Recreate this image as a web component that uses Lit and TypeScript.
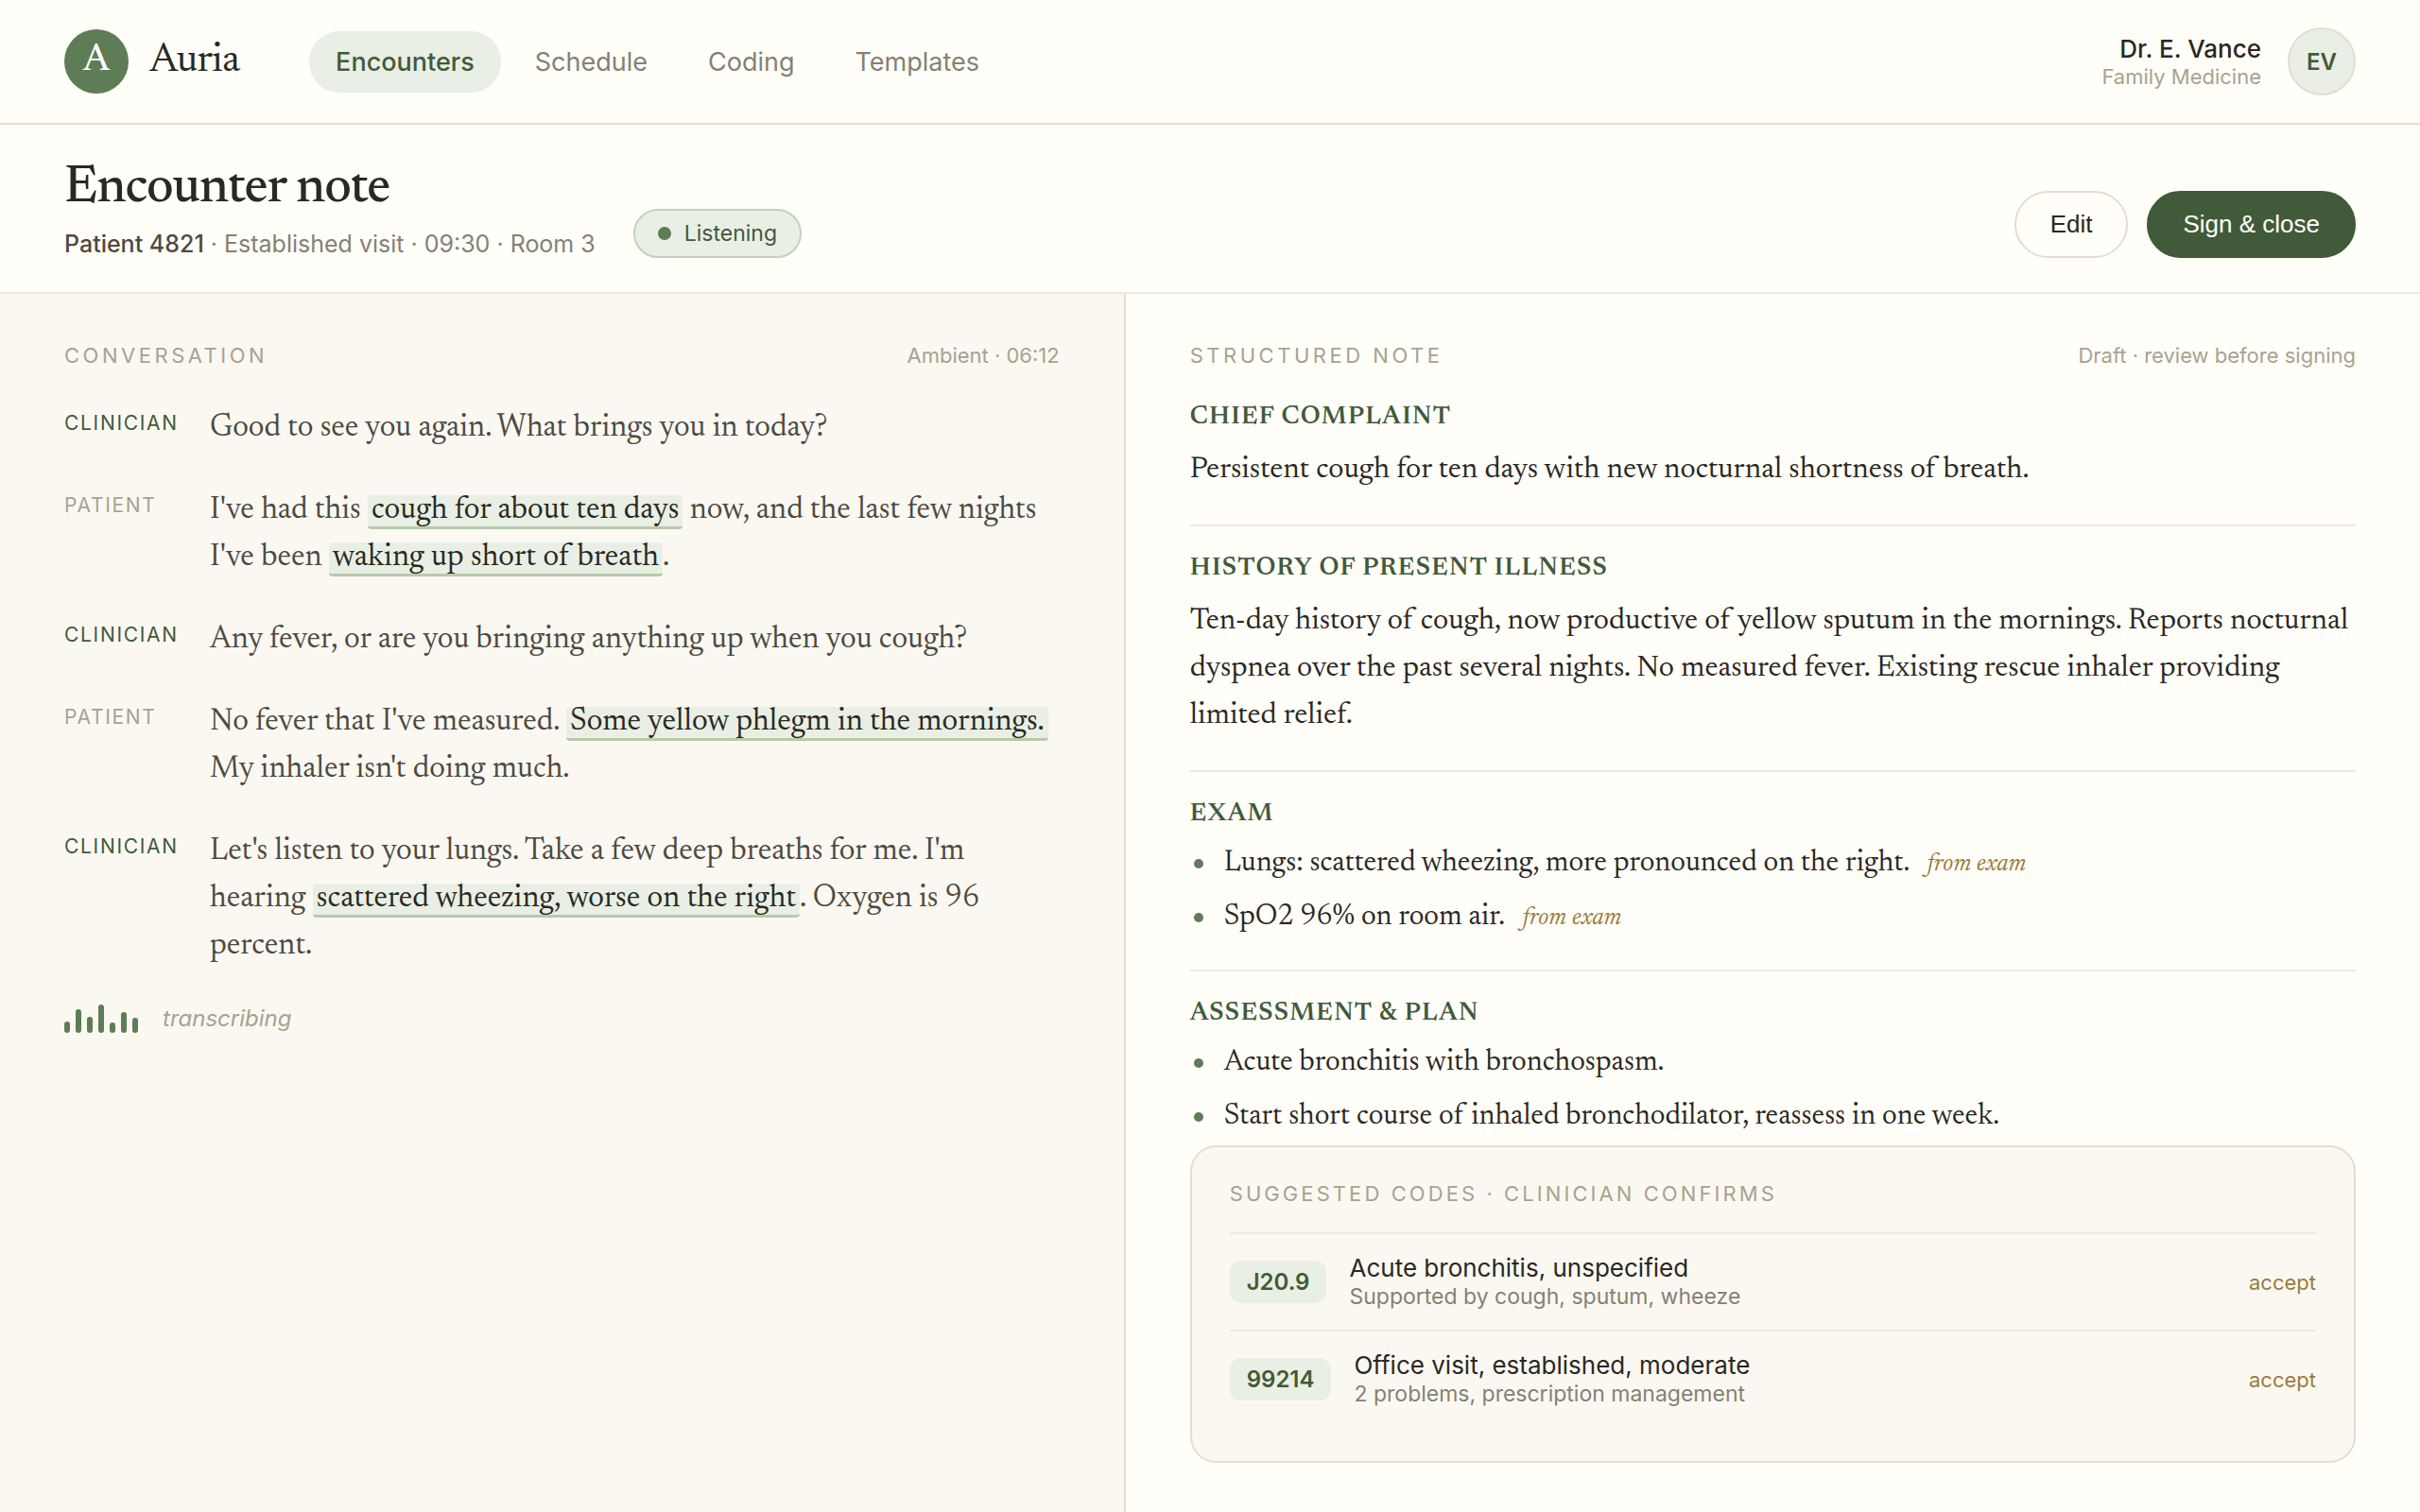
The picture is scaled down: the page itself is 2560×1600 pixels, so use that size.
import { LitElement, html, css, nothing } from "lit";
import { customElement } from "lit/decorators.js";
import { styleMap } from "lit/directives/style-map.js";

type Span = string | { mark: string };
interface Turn { who: "Clinician" | "Patient"; said: Span[] }
interface NoteItem { text: string; source?: string }
interface NoteSection { title: string; body?: string; items?: NoteItem[] }
interface Code { code: string; name: string; why: string }

const NAV = ["Encounters", "Schedule", "Coding", "Templates"];

const TURNS: Turn[] = [
  { who: "Clinician", said: ["Good to see you again. What brings you in today?"] },
  {
    who: "Patient",
    said: [
      "I've had this ",
      { mark: "cough for about ten days" },
      " now, and the last few nights I've been ",
      { mark: "waking up short of breath" },
      ".",
    ],
  },
  { who: "Clinician", said: ["Any fever, or are you bringing anything up when you cough?"] },
  {
    who: "Patient",
    said: [
      "No fever that I've measured. ",
      { mark: "Some yellow phlegm in the mornings." },
      " My inhaler isn't doing much.",
    ],
  },
  {
    who: "Clinician",
    said: [
      "Let's listen to your lungs. Take a few deep breaths for me. I'm hearing ",
      { mark: "scattered wheezing, worse on the right" },
      ". Oxygen is 96 percent.",
    ],
  },
];

const WAVE = [12, 25, 17, 30, 11, 22, 16];

const SECTIONS: NoteSection[] = [
  {
    title: "Chief complaint",
    body: "Persistent cough for ten days with new nocturnal shortness of breath.",
  },
  {
    title: "History of present illness",
    body: "Ten-day history of cough, now productive of yellow sputum in the mornings. Reports nocturnal dyspnea over the past several nights. No measured fever. Existing rescue inhaler providing limited relief.",
  },
  {
    title: "Exam",
    items: [
      { text: "Lungs: scattered wheezing, more pronounced on the right.", source: "from exam" },
      { text: "SpO2 96% on room air.", source: "from exam" },
    ],
  },
  {
    title: "Assessment & plan",
    items: [
      { text: "Acute bronchitis with bronchospasm." },
      { text: "Start short course of inhaled bronchodilator, reassess in one week." },
    ],
  },
];

const CODES: Code[] = [
  { code: "J20.9", name: "Acute bronchitis, unspecified", why: "Supported by cough, sputum, wheeze" },
  { code: "99214", name: "Office visit, established, moderate", why: "2 problems, prescription management" },
];

@customElement("app-root")
export class AppRoot extends LitElement {
  static styles = css`
    :host {
      --paper: #fffef9;
      --cream: #fbf8f2;
      --ink: #2a2822;
      --ink-2: #4d4a41;
      --muted: #858172;
      --faint: #a8a28f;
      --sage: #5e7c55;
      --forest: #415a39;
      --mint: #e9efe4;
      --mint-line: #c3d3b9;
      --line: #e5ddd0;
      --line-soft: #efe9dd;
      --amber: #9c7a3c;
      --serif: Newsreader, "Liberation Serif", serif;
      --sans: Inter, "Liberation Sans", sans-serif;
      display: flex;
      flex-direction: column;
      min-height: 100vh;
      background: var(--paper);
      color: var(--ink);
      font-family: var(--sans);
      font-size: 26px;
    }
    * { box-sizing: border-box; }
    h1, h2, h3, p, ul { margin: 0; padding: 0; }
    ul { list-style: none; }
    button { font-family: "Liberation Sans", sans-serif; cursor: pointer; }

    .top {
      display: flex;
      align-items: center;
      gap: 74px;
      padding: 29px 68px;
      border-bottom: 2px solid var(--line);
    }
    .brand {
      display: flex;
      align-items: center;
      gap: 22px;
      font: 400 44px/52px var(--serif);
      letter-spacing: -0.02em;
    }
    .logo {
      display: grid;
      place-items: center;
      width: 68px;
      height: 68px;
      border-radius: 50%;
      background: var(--sage);
      color: #fff;
      font-size: 40px;
      font-weight: 500;
      letter-spacing: 0;
    }
    .nav { display: flex; gap: 8px; flex: 1; }
    .nav a {
      padding: 16px 28px;
      border-radius: 32px;
      color: var(--muted);
      font-size: 27px;
      line-height: 33px;
      text-decoration: none;
    }
    .nav a.on { background: var(--mint); color: var(--forest); font-weight: 500; }
    .user { display: flex; align-items: center; gap: 28px; text-align: right; }
    .user-name { font-weight: 500; line-height: 32px; }
    .user-role { font-size: 22px; line-height: 26px; color: var(--faint); }
    .avatar {
      display: grid;
      place-items: center;
      width: 72px;
      height: 72px;
      border: 2px solid var(--line);
      border-radius: 50%;
      background: var(--mint);
      color: var(--forest);
      font-size: 24px;
      font-weight: 600;
    }

    .head {
      display: flex;
      align-items: flex-end;
      gap: 40px;
      padding: 36px 68px;
      border-bottom: 2px solid var(--line-soft);
    }
    h1 { font: 500 56px/65px var(--serif); letter-spacing: -0.02em; }
    .visit { margin-top: 10px; font-size: 25px; line-height: 30px; color: var(--muted); }
    .visit b { font-weight: 500; color: var(--ink-2); }
    .status {
      display: flex;
      align-items: center;
      gap: 14px;
      padding: 10px 24px;
      border: 2px solid var(--mint-line);
      border-radius: 26px;
      background: var(--mint);
      color: var(--forest);
      font-size: 23px;
      line-height: 28px;
    }
    .dot { width: 14px; height: 14px; border-radius: 50%; background: var(--sage); }
    .actions { display: flex; gap: 20px; margin-left: auto; }
    .btn {
      padding: 18px 36px;
      border: 2px solid var(--line);
      border-radius: 36px;
      background: transparent;
      color: var(--ink);
      font-size: 26px;
      line-height: 31px;
    }
    .btn.primary { background: var(--forest); border-color: var(--forest); color: #fff; }

    .panes { display: grid; grid-template-columns: 1fr 1.15fr; flex: 1; }
    .pane { padding: 51px 68px 52px; min-width: 0; }
    .talk { background: var(--cream); border-right: 2px solid var(--line); }
    .pane-head {
      display: flex;
      justify-content: space-between;
      align-items: baseline;
      font-size: 22px;
      line-height: 28px;
      color: var(--faint);
    }
    .eyebrow {
      font-size: 22px;
      line-height: 28px;
      font-weight: 400;
      letter-spacing: 0.16em;
      text-transform: uppercase;
      color: var(--faint);
    }

    .turns { display: grid; gap: 37px; margin-top: 39px; }
    .turn { display: grid; grid-template-columns: 120px 1fr; gap: 34px; }
    .who {
      padding-top: 6px;
      font-size: 21px;
      line-height: 26px;
      letter-spacing: 0.08em;
      text-transform: uppercase;
      color: var(--faint);
    }
    .who.clinician { color: var(--forest); }
    .said { font: 400 33px/50px var(--serif); color: var(--ink-2); }
    mark {
      padding: 0 4px;
      border-bottom: 3px solid #b7caaa;
      border-radius: 4px;
      background: var(--mint);
      color: var(--ink);
    }
    .live { display: flex; align-items: center; gap: 26px; margin-top: 36px; }
    .wave { display: flex; align-items: flex-end; gap: 6px; height: 30px; }
    .bar { width: 6px; border-radius: 3px; background: var(--sage); }
    .live-text { font-size: 24px; line-height: 30px; font-style: italic; color: var(--faint); }

    .note { padding-top: 7px; }
    .section { padding: 27px 0 33px; border-bottom: 2px solid var(--line-soft); }
    .section:last-child { padding-bottom: 8px; border-bottom: 0; }
    h3 {
      font: 600 27px/36px var(--serif);
      letter-spacing: 0.05em;
      text-transform: uppercase;
      color: var(--forest);
    }
    .body { margin-top: 12px; font: 400 32px/50px var(--serif); }
    .items { display: grid; gap: 12px; margin-top: 11px; font: 400 31px/45px var(--serif); }
    .item { display: flex; align-items: center; gap: 22px; padding-left: 4px; }
    .item::before { content: ""; width: 10px; height: 10px; border-radius: 50%; background: var(--sage); }
    .source {
      margin-left: 12px;
      font-size: 26px;
      font-style: italic;
      line-height: 1;
      color: var(--amber);
    }

    .codes {
      padding: 35px 40px 36px;
      border: 2px solid var(--line);
      border-radius: 28px;
      background: var(--cream);
    }
    .codes .eyebrow { letter-spacing: 0.14em; }
    .code-list { margin-top: 27px; }
    .code {
      display: flex;
      align-items: center;
      gap: 24px;
      padding: 20px 0;
      border-top: 2px solid var(--line-soft);
    }
    .chip {
      padding: 8px 18px;
      border-radius: 12px;
      background: var(--mint);
      color: var(--forest);
      font-size: 24px;
      font-weight: 600;
      line-height: 29px;
    }
    .code-text { flex: 1; }
    .code-name { line-height: 32px; }
    .code-why { font-size: 23px; line-height: 29px; color: var(--muted); }
    .accept { padding: 0; border: 0; background: none; font: 400 22px/28px var(--sans); color: var(--amber); }
  `;

  private renderTurn(t: Turn) {
    return html`<div class="turn">
      <div class="who ${t.who.toLowerCase()}">${t.who}</div>
      <p class="said">${t.said.map((s) => (typeof s === "string" ? s : html`<mark>${s.mark}</mark>`))}</p>
    </div>`;
  }

  private renderSection(s: NoteSection) {
    return html`<section class="section">
      <h3>${s.title}</h3>
      ${s.body ? html`<p class="body">${s.body}</p>` : nothing}
      ${s.items
        ? html`<ul class="items">
            ${s.items.map(
              (i) => html`<li class="item"><span>${i.text}${i.source ? html` <span class="source">${i.source}</span>` : nothing}</span></li>`,
            )}
          </ul>`
        : nothing}
    </section>`;
  }

  private renderCode(c: Code) {
    return html`<li class="code">
      <span class="chip">${c.code}</span>
      <div class="code-text">
        <div class="code-name">${c.name}</div>
        <div class="code-why">${c.why}</div>
      </div>
      <button class="accept" aria-label="accept ${c.code}">accept</button>
    </li>`;
  }

  render() {
    return html`
      <header class="top">
        <div class="brand"><span class="logo">A</span><span>Auria</span></div>
        <nav class="nav">
          ${NAV.map((n, i) => html`<a href="#${n.toLowerCase()}" class=${i === 0 ? "on" : ""}>${n}</a>`)}
        </nav>
        <div class="user">
          <div>
            <div class="user-name">Dr. E. Vance</div>
            <div class="user-role">Family Medicine</div>
          </div>
          <div class="avatar">EV</div>
        </div>
      </header>

      <div class="head">
        <div>
          <h1>Encounter note</h1>
          <p class="visit"><b>Patient 4821</b> · Established visit · 09:30 · Room 3</p>
        </div>
        <div class="status"><span class="dot"></span>Listening</div>
        <div class="actions">
          <button class="btn">Edit</button>
          <button class="btn primary">Sign &amp; close</button>
        </div>
      </div>

      <main class="panes">
        <section class="pane talk">
          <div class="pane-head"><h2 class="eyebrow">Conversation</h2><span>Ambient · 06:12</span></div>
          <div class="turns">${TURNS.map((t) => this.renderTurn(t))}</div>
          <div class="live">
            <div class="wave">
              ${WAVE.map((h) => html`<span class="bar" style=${styleMap({ height: `${h}px` })}></span>`)}
            </div>
            <span class="live-text">transcribing</span>
          </div>
        </section>

        <section class="pane">
          <div class="pane-head"><h2 class="eyebrow">Structured note</h2><span>Draft · review before signing</span></div>
          <div class="note">${SECTIONS.map((s) => this.renderSection(s))}</div>
          <aside class="codes">
            <h2 class="eyebrow">Suggested codes · clinician confirms</h2>
            <ul class="code-list">${CODES.map((c) => this.renderCode(c))}</ul>
          </aside>
        </section>
      </main>
    `;
  }
}
